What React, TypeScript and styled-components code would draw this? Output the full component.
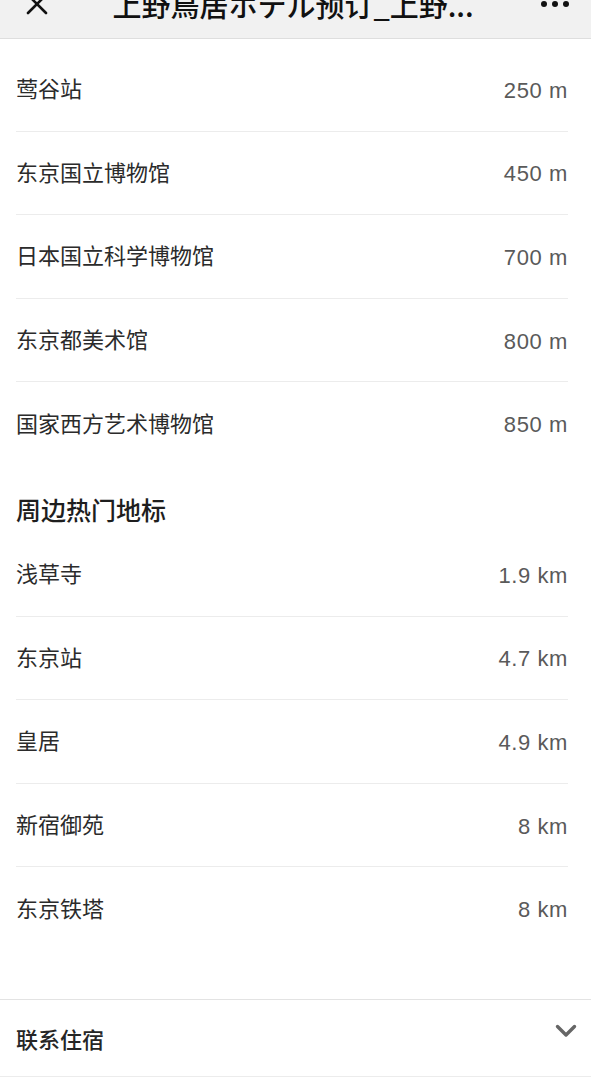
import React from "react";
import styled, {createGlobalStyle} from "styled-components";

const GlobalStyle = createGlobalStyle`
  html, body {
    margin: 0;
    padding: 0;
    background: #ffffff;
  }
  body {
    font-family: "Noto Sans CJK SC", "Noto Sans", sans-serif;
    -webkit-font-smoothing: antialiased;
  }
`

const Page = styled.div`
  width: 591px;
  min-height: 1080px;
  overflow: hidden;
  background: #fff;
`
const NavClip = styled.div`
  height: 38px;
  overflow: hidden;
  background: #f1f1f1;
  border-bottom: 1px solid #dedede;
`
const NavBar = styled.div`
  height: 56px;
  margin-top: -24px;
  display: flex;
  align-items: center;
  padding: 0 22px 0 25px;
  color: #111;
`
const NavTitle = styled.div`
  flex: 1;
  text-align: center;
  font-size: 29px;
  font-weight: 500;
  white-space: nowrap;
  overflow: hidden;
  padding: 0 34px 0 30px;
`
const MenuDots = styled.div`
  display: flex;
  gap: 5px;
`
const Dot = styled.span`
  width: 6px;
  height: 6px;
  border-radius: 50%;
  background: #111;
`
const Section = styled.section`
  padding: 9px 23px 0 16px;
`
const Heading = styled.h2`
  margin: 0;
  padding: 30px 0 11px;
  font-size: 25px;
  line-height: 26px;
  font-weight: 500;
  color: #1e1e1e;
`
const Row = styled.div<{ last?: boolean }>`
  height: 82.6px;
  display: flex;
  align-items: center;
  justify-content: space-between;
  border-bottom: 1px solid ${props => props.last ? 'transparent' : '#ececec'};
`
const Name = styled.span`
  font-size: 22px;
  color: #2b2b2b;
  padding-bottom: 4px;
`
const Distance = styled.span`
  font-family: "Liberation Sans", Arial, sans-serif;
  font-size: 22px;
  letter-spacing: 0.6px;
  color: #5a5a5a;
  padding-top: 3px;
`
const Spacer = styled.div`
  height: 48px;
`
const ContactRow = styled.div`
  height: 76px;
  display: flex;
  align-items: center;
  justify-content: space-between;
  padding: 0 14px 0 16px;
  border-top: 1px solid #e3e3e3;
  border-bottom: 1px solid #ececec;
`
const ContactLabel = styled.span`
  font-size: 22px;
  font-weight: 500;
  color: #262626;
`
const Chevron = styled.svg`
  margin-top: -14px;
`

const nearby = [
    {name: '莺谷站', dist: '250 m'},
    {name: '东京国立博物馆', dist: '450 m'},
    {name: '日本国立科学博物馆', dist: '700 m'},
    {name: '东京都美术馆', dist: '800 m'},
    {name: '国家西方艺术博物馆', dist: '850 m'},
]
const landmarks = [
    {name: '浅草寺', dist: '1.9 km'},
    {name: '东京站', dist: '4.7 km'},
    {name: '皇居', dist: '4.9 km'},
    {name: '新宿御苑', dist: '8 km'},
    {name: '东京铁塔', dist: '8 km'},
]

type Place = { name: string, dist: string }

const PlaceList: React.FC<{ places: Place[] }> = ({places}) => (
    <>
        {places.map((p, idx) => <Row key={p.name} last={idx === places.length - 1}>
            <Name>{p.name}</Name>
            <Distance>{p.dist}</Distance>
        </Row>)}
    </>
)

export default function App() {
    return (
        <Page>
            <GlobalStyle/>
            <NavClip>
                <NavBar>
                    <svg width="24" height="24" viewBox="0 0 24 24">
                        <path d="M3 3 L21 21 M21 3 L3 21" stroke="#111" strokeWidth="2.6" strokeLinecap="round"/>
                    </svg>
                    <NavTitle>上野鳥居ホテル预订_上野...</NavTitle>
                    <MenuDots>
                        <Dot/><Dot/><Dot/>
                    </MenuDots>
                </NavBar>
            </NavClip>
            <Section>
                <PlaceList places={nearby}/>
                <Heading>周边热门地标</Heading>
                <PlaceList places={landmarks}/>
            </Section>
            <Spacer/>
            <ContactRow>
                <ContactLabel>联系住宿</ContactLabel>
                <Chevron width="22" height="14" viewBox="0 0 22 14">
                    <path d="M2.5 2.5 L11 11 L19.5 2.5" fill="none" stroke="#666" strokeWidth="3.4"
                          strokeLinecap="round" strokeLinejoin="round"/>
                </Chevron>
            </ContactRow>
        </Page>
    )
}
